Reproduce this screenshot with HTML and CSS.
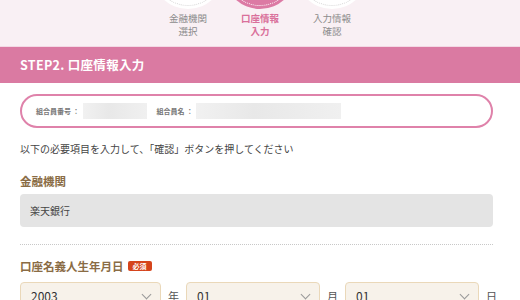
FILE: index.html
```html
<!DOCTYPE html>
<html lang="ja">
<head>
	<meta charset="UTF-8">
	<meta name="viewport" content="width=device-width, initial-scale=1.0">
	<title>口座情報入力</title>
	<link rel="stylesheet" href="styles.css">
</head>
<body>

	<header class="pasos">
		<div class="paso">
			<div class="circulo"></div>
			<p class="pasoTexto">金融機関<br>選択</p>
		</div>
		<div class="paso activo">
			<div class="circulo"></div>
			<p class="pasoTexto">口座情報<br>入力</p>
		</div>
		<div class="paso">
			<div class="circulo"></div>
			<p class="pasoTexto">入力情報<br>確認</p>
		</div>
	</header>

	<h1 class="barra">STEP2. 口座情報入力</h1>

	<main>
		<div class="miembro">
			<span class="miembroLabel">組合員番号 ：</span>
			<span class="oculto corto"></span>
			<span class="miembroLabel">組合員名 ：</span>
			<span class="oculto largo"></span>
		</div>

		<p class="aviso">以下の必要項目を入力して、「確認」ボタンを押してください</p>

		<h2 class="campo">金融機関</h2>
		<div class="fijo">楽天銀行</div>

		<hr class="linea">

		<h2 class="campo">口座名義人生年月日 <span class="requerido">必須</span></h2>
		<div class="fecha">
			<div class="select">2003<span class="flecha"></span></div>
			<span class="unidad">年</span>
			<div class="select">01<span class="flecha"></span></div>
			<span class="unidad">月</span>
			<div class="select">01<span class="flecha"></span></div>
			<span class="unidad">日</span>
		</div>
	</main>

</body>
</html>
```

FILE: styles.css
```css
body{
	margin: 0;
	padding: 0;
	font-family: "Noto Sans CJK JP", "Noto Sans", sans-serif;
	color: #444;
	background: #fff;
	overflow: hidden;
}

.pasos{
	height: 46px;
	background: #f9f0f4;
	display: flex;
	justify-content: center;
	overflow: hidden;
}

.paso{
	width: 72px;
	display: flex;
	flex-flow: column;
	align-items: center;
}

.circulo{
	width: 72px;
	height: 72px;
	margin-top: -63px;
	border-radius: 50%;
	background: #fff;
	position: relative;
	flex-shrink: 0;
}

.circulo::after{
	content: "";
	position: absolute;
	inset: 3px;
	border-radius: 50%;
	border: 1px dotted #d6d6d6;
}

.activo .circulo{
	background: #dc7aa4;
}

.activo .circulo::after{
	border-color: #fff;
}

.pasoTexto{
	margin: 3px 0 0;
	font-size: 9.5px;
	line-height: 12.5px;
	text-align: center;
	color: #8c8c8c;
}

.activo .pasoTexto{
	color: #d9709b;
	font-weight: bold;
}

.barra{
	margin: 0;
	height: 36px;
	border-top: 1px solid #f3d9e4;
	background: #da7aa2;
	color: #fff;
	font-size: 12.5px;
	font-weight: bold;
	letter-spacing: 0.3px;
	line-height: 36px;
	padding-left: 20px;
}

main{
	padding: 11px 27px 0 20px;
}

.miembro{
	height: 30px;
	border: 2px solid #df82aa;
	border-radius: 17px;
	display: flex;
	align-items: center;
	padding-left: 14px;
	font-size: 7px;
	color: #666;
}

.miembroLabel{
	font-weight: bold;
	color: #777;
}

.oculto{
	height: 16px;
	background: linear-gradient(90deg, #f1f1f1, #e8e8e8 40%, #f0f0f0);
	margin-left: 3px;
}

.corto{
	width: 64px;
	margin-right: 10px;
}

.largo{
	width: 145px;
}

.aviso{
	margin: 14px 0 0;
	font-size: 10px;
	line-height: 14px;
	color: #444;
}

.campo{
	margin: 17px 0 0;
	font-size: 11.5px;
	line-height: 16px;
	color: #8a6c45;
	font-weight: bold;
	display: flex;
	align-items: center;
	gap: 4px;
}

.fijo{
	margin-top: 5px;
	height: 33px;
	background: #e4e4e4;
	border-radius: 4px;
	padding-left: 10px;
	font-size: 10px;
	line-height: 33px;
	color: #444;
}

.linea{
	margin: 17px 0 0;
	border: 0;
	border-top: 1px dotted #c8c8c8;
}

.linea + .campo{
	margin-top: 13px;
}

.requerido{
	background: #d5441c;
	color: #fff;
	font-size: 7px;
	line-height: 10px;
	padding: 0 5px;
	border-radius: 2px;
}

.fecha{
	margin-top: 8px;
	display: grid;
	grid-template-columns: 141px auto 134px auto 134px auto;
	column-gap: 7px;
	align-items: start;
}

.select{
	height: 30px;
	box-sizing: border-box;
	background: #f7f2ea;
	border: 1px solid #ead8b9;
	border-radius: 4px;
	padding-left: 10px;
	font-size: 12px;
	line-height: 26px;
	color: #333;
	position: relative;
}

.flecha{
	position: absolute;
	right: 10px;
	top: 8px;
	width: 6px;
	height: 6px;
	border-right: 1px solid #999;
	border-bottom: 1px solid #999;
	transform: rotate(45deg);
}

.unidad{
	font-size: 11px;
	line-height: 28px;
	color: #555;
}
```
